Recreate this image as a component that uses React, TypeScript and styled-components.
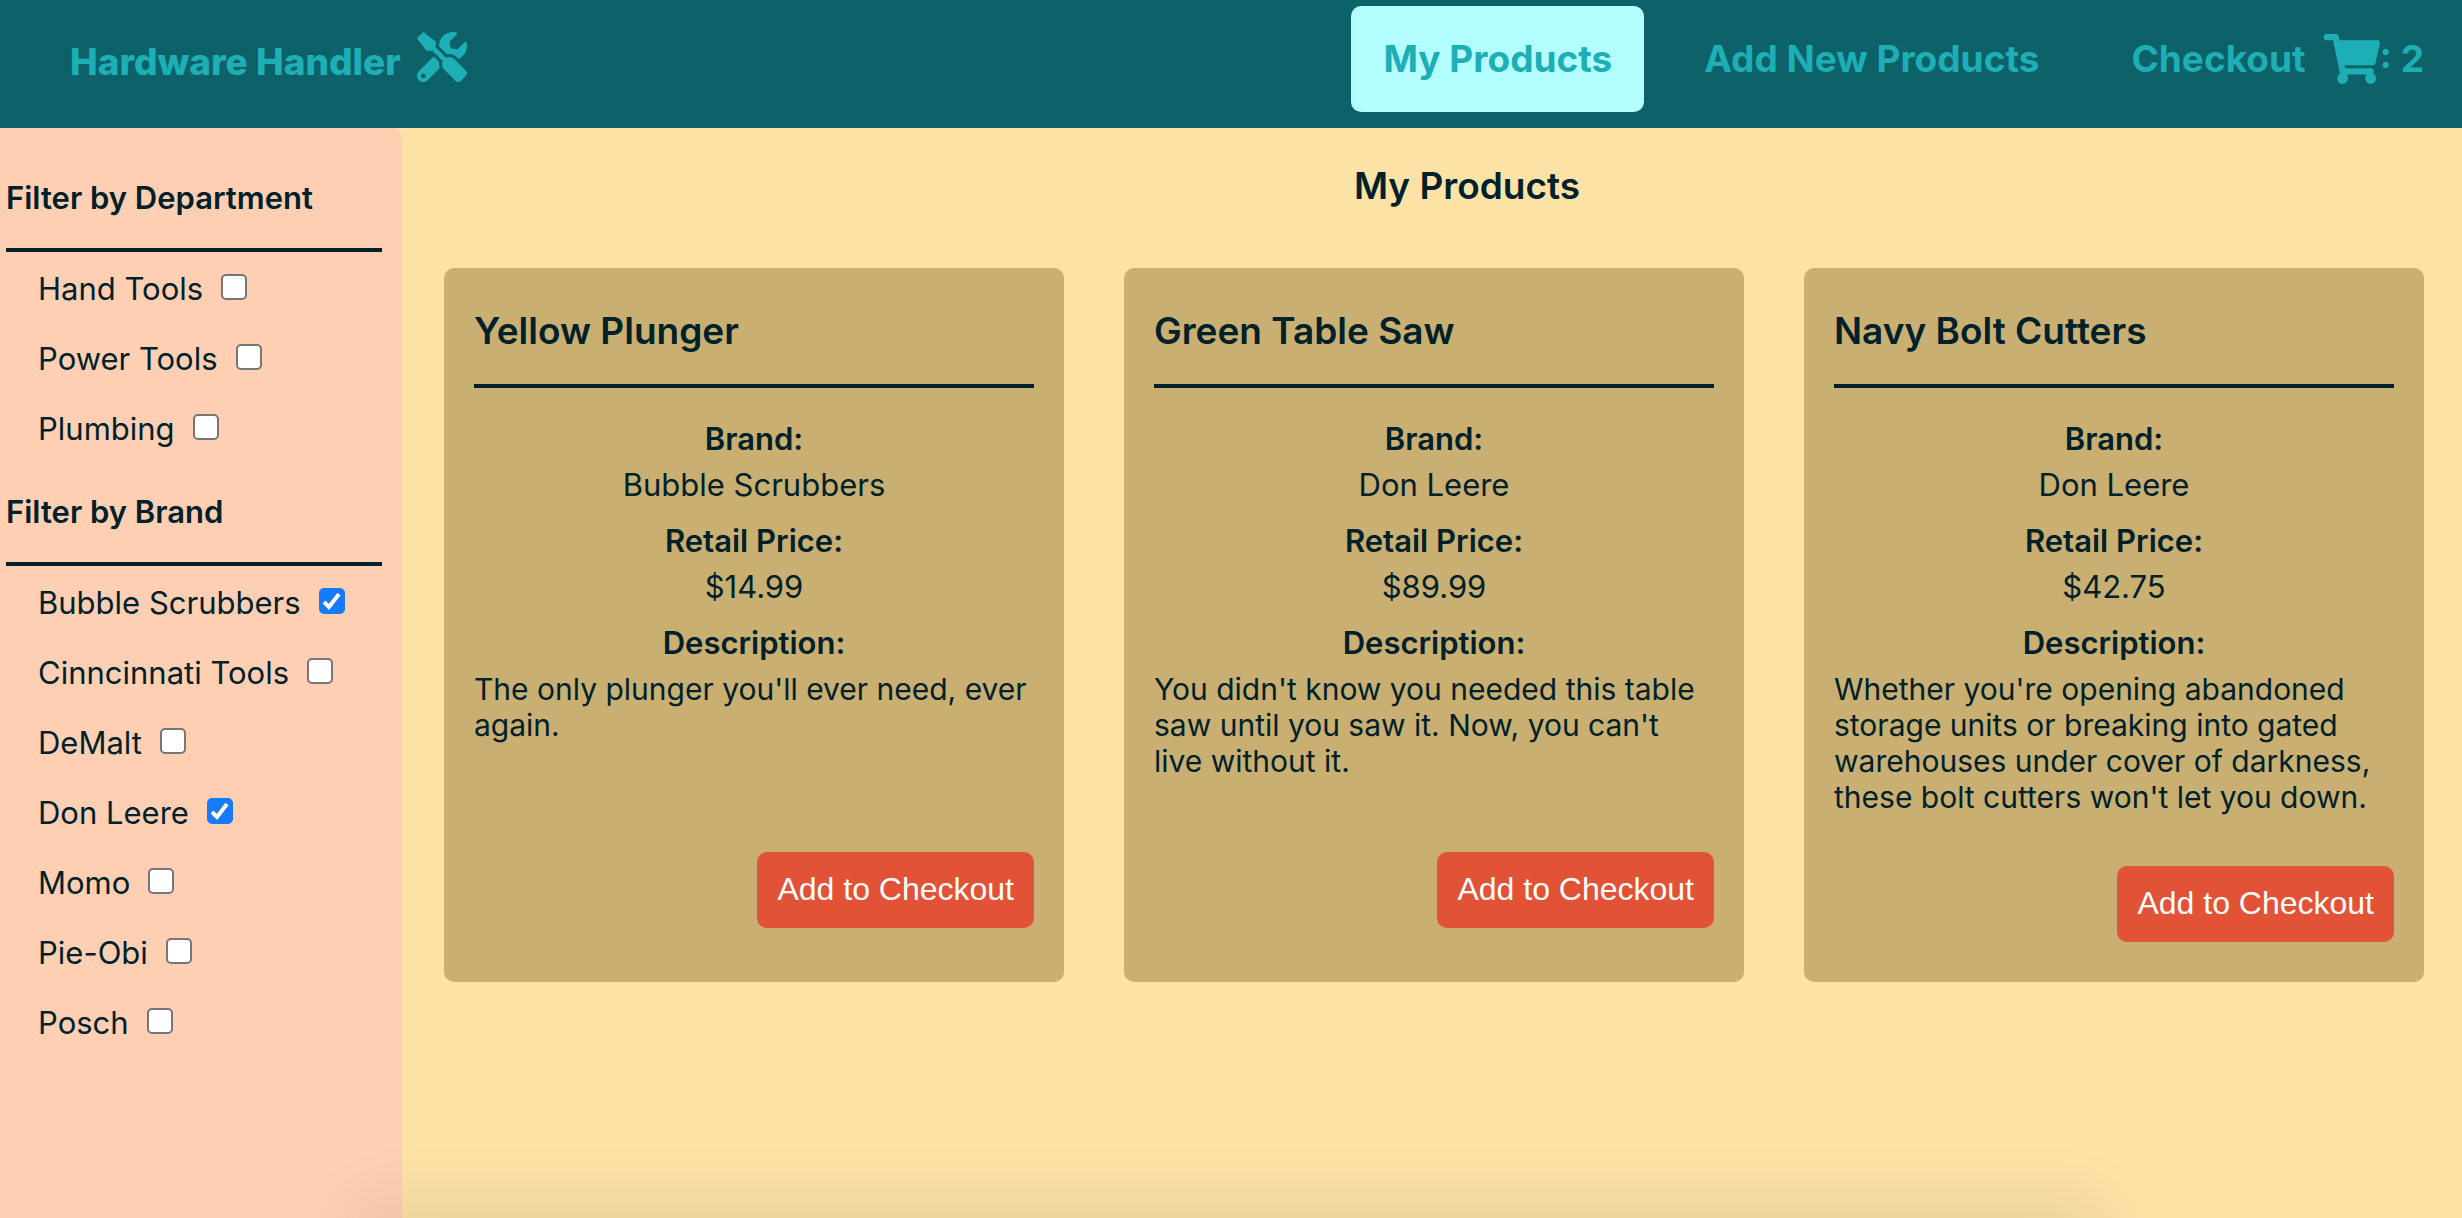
import React, { useState } from 'react';
import styled, { createGlobalStyle } from 'styled-components';
import { FaShoppingCart, FaTools } from 'react-icons/fa';

const GlobalStyle = createGlobalStyle`
  * { box-sizing: border-box; }
  body {
    margin: 0;
    background: #fce2a5;
    color: #00212a;
    font-family: Inter, Roboto, sans-serif;
    font-size: 31px;
    line-height: 36px;
  }
`;

const Page = styled.div`
  display: flex;
  flex-direction: column;
  min-height: 100vh;
`;

const Header = styled.header`
  display: flex;
  justify-content: space-between;
  align-items: flex-start;
  min-height: 128px;
  padding: 6px 6px 16px 38px;
  background: #0c6268;
`;

const Brand = styled.a`
  display: flex;
  align-items: center;
  gap: 16px;
  padding: 26px 32px;
  color: #1eaeb5;
  font-size: 37px;
  font-weight: 800;
  text-decoration: none;
`;

const BrandName = styled.span`
  padding-top: 10px;
`;

const Nav = styled.nav`
  display: flex;
  gap: 28px;
`;

const NavLink = styled.a<{ $active?: boolean }>`
  display: flex;
  align-items: center;
  height: 106px;
  padding: 0 32px;
  border-radius: 10px;
  background: ${(p) => (p.$active ? '#b3ffff' : 'transparent')};
  color: #1eaeb5;
  font-size: 37px;
  font-weight: 700;
  text-decoration: none;
`;

const CartIcon = styled(FaShoppingCart)`
  width: 56px;
  height: 50px;
  margin-left: 18px;
`;

const ToolsIcon = styled(FaTools)`
  width: 50px;
  height: 50px;
`;

const Body = styled.div`
  display: flex;
  flex: 1;
`;

const Sidebar = styled.aside`
  flex: 0 0 402px;
  padding: 50px 20px 0 6px;
  border-top-right-radius: 10px;
  background: #ffcfb3;
`;

const FilterGroup = styled.fieldset`
  margin: 0 0 28px;
  padding: 0;
  border: 0;
`;

const FilterTitle = styled.legend`
  width: 100%;
  margin-bottom: 2px;
  padding: 2px 0 32px;
  border-bottom: 4px solid #00212a;
  font-weight: 600;
`;

const FilterRow = styled.label`
  display: flex;
  align-items: center;
  gap: 18px;
  height: 70px;
  padding-left: 32px;
`;

const Tick = styled.input`
  appearance: none;
  width: 26px;
  height: 26px;
  margin: 0 0 4px;
  border: 2px solid #767676;
  border-radius: 5px;
  background: #fff;
  &:checked {
    border-color: #167aff;
    background: #167aff url("data:image/svg+xml,%3Csvg xmlns='http://www.w3.org/2000/svg' viewBox='0 0 22 22'%3E%3Cpath d='M3 12l5 5L18 4' fill='none' stroke='white' stroke-width='4'/%3E%3C/svg%3E") center / 22px 22px no-repeat;
  }
`;

const Main = styled.main`
  flex: 1;
  min-width: 0;
  padding: 36px 38px 40px 42px;
`;

const PageTitle = styled.h1`
  margin: 0 0 60px;
  padding-left: 66px;
  font-size: 37px;
  font-weight: 600;
  line-height: 44px;
  text-align: center;
`;

const Cards = styled.div`
  display: grid;
  grid-template-columns: repeat(3, minmax(0, 1fr));
  gap: 60px;
`;

const Card = styled.article`
  display: flex;
  flex-direction: column;
  padding: 40px 30px;
  border-radius: 10px;
  background: #c9af71;
`;

const CardTitle = styled.h2`
  margin: 0 0 33px;
  padding: 1px 0 31px;
  border-bottom: 4px solid #00212a;
  font-size: 37px;
  font-weight: 600;
  line-height: 44px;
`;

const Details = styled.dl`
  margin: 0;
`;

const Term = styled.dt`
  margin-bottom: 10px;
  font-weight: 600;
  text-align: center;
`;

const Value = styled.dd`
  margin: 0 0 20px;
  text-align: center;
`;

const Description = styled.dd`
  min-height: 130px;
  margin: 0;
  font-size: 30px;
`;

const AddButton = styled.button`
  align-self: flex-end;
  height: 76px;
  margin-top: 51px;
  padding: 0 20px 2px;
  border: 0;
  border-radius: 10px;
  background: #e25237;
  color: #fff;
  font: 32px/36px "Liberation Sans", Arial, sans-serif;
`;

const WindowShadow = styled.div`
  position: fixed;
  top: 100%;
  left: 15%;
  right: 15%;
  height: 40px;
  box-shadow: 0 0 70px 10px rgba(0, 0, 0, 0.1);
`;

const departments = ['Hand Tools', 'Power Tools', 'Plumbing'];
const brands = ['Bubble Scrubbers', 'Cinncinnati Tools', 'DeMalt', 'Don Leere', 'Momo', 'Pie-Obi', 'Posch'];

const products = [
  {
    name: 'Yellow Plunger',
    brand: 'Bubble Scrubbers',
    price: '$14.99',
    description: "The only plunger you'll ever need, ever again.",
  },
  {
    name: 'Green Table Saw',
    brand: 'Don Leere',
    price: '$89.99',
    description: "You didn't know you needed this table saw until you saw it. Now, you can't live without it.",
  },
  {
    name: 'Navy Bolt Cutters',
    brand: 'Don Leere',
    price: '$42.75',
    description:
      "Whether you're opening abandoned storage units or breaking into gated warehouses under cover of darkness, these bolt cutters won't let you down.",
  },
];

type FilterProps = {
  title: string;
  options: string[];
  selected: string[];
  onToggle: (name: string) => void;
};

function Filter({ title, options, selected, onToggle }: FilterProps) {
  return (
    <FilterGroup>
      <FilterTitle>{title}</FilterTitle>
      {options.map((name) => (
        <FilterRow key={name}>
          {name}
          <Tick type="checkbox" checked={selected.includes(name)} onChange={() => onToggle(name)} />
        </FilterRow>
      ))}
    </FilterGroup>
  );
}

export default function App() {
  const [selected, setSelected] = useState(['Bubble Scrubbers', 'Don Leere']);
  const [count, setCount] = useState(2);
  const toggle = (name: string) =>
    setSelected((s) => (s.includes(name) ? s.filter((n) => n !== name) : [...s, name]));

  return (
    <Page>
      <GlobalStyle />
      <Header>
        <Brand href="#home">
          <BrandName>Hardware Handler</BrandName>
          <ToolsIcon />
        </Brand>
        <Nav>
          <NavLink href="#products" $active>My Products</NavLink>
          <NavLink href="#new">Add New Products</NavLink>
          <NavLink href="#checkout">
            Checkout
            <CartIcon />: {count}
          </NavLink>
        </Nav>
      </Header>
      <Body>
        <Sidebar>
          <Filter title="Filter by Department" options={departments} selected={selected} onToggle={toggle} />
          <Filter title="Filter by Brand" options={brands} selected={selected} onToggle={toggle} />
        </Sidebar>
        <Main>
          <PageTitle>My Products</PageTitle>
          <Cards>
            {products.map((p) => (
              <Card key={p.name}>
                <CardTitle>{p.name}</CardTitle>
                <Details>
                  <Term>Brand:</Term>
                  <Value>{p.brand}</Value>
                  <Term>Retail Price:</Term>
                  <Value>{p.price}</Value>
                  <Term>Description:</Term>
                  <Description>{p.description}</Description>
                </Details>
                <AddButton type="button" onClick={() => setCount(count + 1)}>Add to Checkout</AddButton>
              </Card>
            ))}
          </Cards>
        </Main>
      </Body>
      <WindowShadow />
    </Page>
  );
}
